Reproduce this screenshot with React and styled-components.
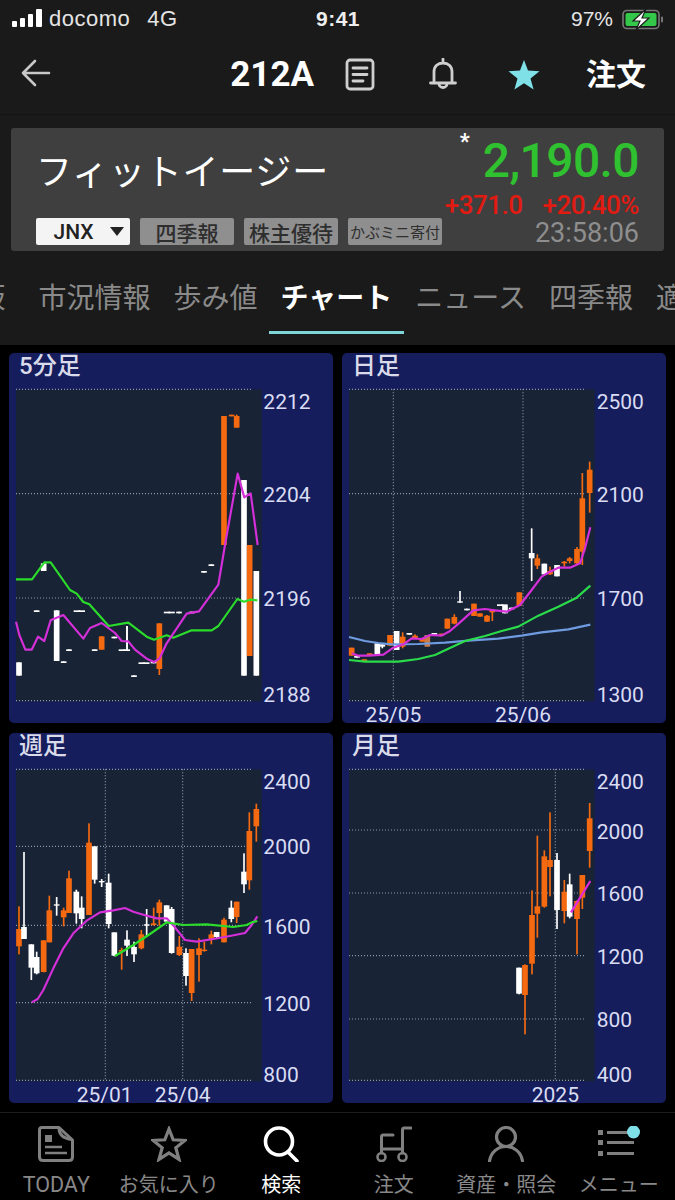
import React from 'react'
import styled, { createGlobalStyle } from 'styled-components'

const O = '#f56a10'
const W = '#ffffff'

// chart numbers are in 3x pixels of the panel, [x, wickTop, wickBottom, bodyTop, bodyBottom, colour, bodyWidth]
const dash = (x, y, w = 17, c = W) => [x, y, y + 5, y, y + 5, c, w]

const charts = [
    {
        title: '5分足',
        originX: 27,
        plotX: 48,
        gridY: [133, 446, 759, 1067],
        gridX: [],
        yLabels: [['2212', 193], ['2204', 471], ['2196', 784], ['2188', 1070]],
        xLabels: [],
        labelX: 790,
        candles: [
            [57, 952, 992, 952, 992, W],
            [131, 655, 678, 655, 678, W],
            dash(110, 796),
            [170, 796, 948, 796, 948, W],
            dash(191, 949),
            dash(207, 913),
            dash(238, 796, 34),
            dash(284, 913),
            [305, 874, 914, 874, 914, O],
            dash(343, 875),
            [381, 843, 916, 843, 916, W, 5],
            dash(373, 913, 34),
            dash(402, 991),
            dash(432, 952, 33),
            dash(461, 950, 18),
            [478, 835, 990, 835, 972, O],
            dash(508, 800, 33),
            dash(537, 800),
            dash(575, 800),
            dash(612, 678),
            dash(634, 658),
            [672, 213, 600, 213, 600, O],
            dash(695, 209, 17, O),
            [710, 209, 248, 213, 248, O],
            [732, 405, 992, 405, 992, W],
            [749, 600, 933, 600, 933, O],
            [769, 678, 992, 678, 992, W],
        ],
        lines: [
            ['#2bdc2b', '48,703 96,703 133,652 152,652 210,735 230,746 250,771 268,778 326,843 385,833 440,875 462,884 500,871 520,878 575,856 635,856 655,843 712,762 732,770 750,764 772,766'],
            ['#d42fd8', '48,830 58,870 76,914 95,914 114,875 133,888 152,826 190,810 250,881 270,849 305,834 345,864 365,888 385,889 405,914 440,941 462,951 478,941 500,895 560,806 597,799 655,719 675,600 713,386 733,457 752,445 773,600'],
        ],
    },
    {
        title: '日足',
        originX: 21,
        plotX: 42,
        gridY: [133, 446, 759, 1067],
        gridX: [175, 564],
        yLabels: [['2500', 193], ['2100', 471], ['1700', 784], ['1300', 1070]],
        xLabels: [['25/05', 175], ['25/06', 564]],
        labelX: 785,
        candles: [
            [50, 908, 932, 908, 932, O],
            dash(66, 933),
            dash(88, 943, 17, O),
            dash(104, 925, 17, O),
            [127, 895, 927, 895, 927, W],
            [142, 898, 910, 898, 905, W],
            [165, 870, 902, 870, 902, O],
            [185, 858, 915, 858, 915, W],
            [203, 862, 910, 875, 905, O],
            dash(223, 864),
            [240, 868, 880, 872, 880, O],
            [262, 880, 890, 880, 890, O],
            [277, 870, 905, 870, 905, '#c97a45'],
            dash(298, 864),
            dash(320, 866, 17, O),
            [337, 821, 851, 821, 851, O],
            [358, 808, 838, 816, 836, O],
            [375, 738, 773, 769, 773, W],
            dash(396, 791),
            [417, 776, 813, 776, 813, O],
            [435, 805, 815, 805, 815, O],
            [456, 810, 830, 812, 830, O],
            [472, 795, 828, 795, 802, O],
            dash(502, 778, 32),
            [510, 780, 805, 782, 805, W],
            dash(530, 788),
            [553, 742, 782, 742, 782, O],
            [590, 550, 708, 624, 640, W],
            [607, 628, 672, 640, 662, O],
            [628, 656, 688, 656, 688, W],
            [645, 665, 690, 678, 688, O],
            [666, 660, 694, 660, 694, W],
            [688, 648, 665, 650, 655, O],
            [704, 636, 655, 640, 648, O],
            [726, 606, 658, 612, 655, O],
            [742, 384, 660, 460, 620, O],
            [764, 350, 503, 374, 444, O],
        ],
        lines: [
            ['#6f9be0', '42,876 90,888 130,894 170,898 250,897 330,893 400,887 490,881 560,872 620,862 700,853 766,839'],
            ['#2bdc4a', '42,945 90,950 190,950 250,942 300,930 340,911 390,888 450,873 500,858 550,845 610,812 670,785 725,758 766,722'],
            ['#d42fd8', '50,925 70,932 100,932 145,929 175,908 205,898 230,880 260,882 285,870 320,872 345,858 375,832 415,796 450,792 480,796 515,800 555,780 590,735 620,695 645,680 670,668 705,668 735,655 750,610 766,547'],
        ],
    },
    {
        title: '週足',
        originX: 27,
        plotX: 48,
        gridY: [133, 364, 601, 833, 1066],
        gridX: [316, 548],
        yLabels: [['2400', 193], ['2000', 388], ['1600', 628], ['1200', 858], ['800', 1070]],
        xLabels: [['25/01', 314], ['25/04', 548]],
        labelX: 790,
        candles: [
            [57, 544, 688, 612, 664, O],
            [72, 381, 642, 606, 642, W],
            [94, 658, 765, 658, 728, W],
            [110, 680, 748, 696, 745, W],
            [131, 646, 742, 646, 741, O],
            [148, 512, 652, 556, 652, O],
            [170, 516, 572, 538, 542, W],
            [191, 548, 604, 556, 577, O],
            [207, 437, 564, 460, 564, O],
            [229, 494, 596, 500, 565, W],
            [245, 514, 610, 548, 582, W],
            [267, 295, 570, 353, 570, O],
            [284, 364, 476, 364, 464, W],
            [305, 462, 486, 468, 472, W],
            [326, 446, 610, 473, 597, W],
            [343, 622, 694, 622, 692, W],
            [365, 668, 734, 675, 680, O],
            [381, 616, 693, 644, 662, W],
            [402, 650, 711, 666, 688, W],
            [424, 615, 673, 628, 670, O],
            [440, 552, 636, 598, 602, W],
            [461, 548, 602, 595, 600, O],
            [478, 524, 602, 532, 564, O],
            [500, 541, 590, 541, 590, W],
            [515, 546, 686, 552, 684, W],
            [538, 633, 693, 665, 690, O],
            [558, 670, 782, 684, 753, W],
            [575, 672, 828, 672, 804, O],
            [597, 640, 770, 670, 690, O],
            [613, 650, 680, 674, 678, O],
            [634, 617, 658, 628, 644, O],
            [650, 621, 640, 621, 636, W],
            [672, 578, 652, 584, 652, O],
            [694, 527, 592, 548, 582, W],
            [710, 530, 594, 530, 576, O],
            [732, 385, 504, 440, 478, W],
            [748, 262, 494, 318, 466, O],
            [769, 236, 350, 252, 304, O],
        ],
        lines: [
            ['#d42fd8', '95,832 113,822 130,795 160,730 190,670 220,625 260,587 300,562 340,556 375,549 400,560 440,572 470,580 500,580 525,607 555,645 590,650 640,642 690,633 735,624 755,600 772,574'],
            ['#2bdc2b', '345,693 400,660 450,627 500,592 550,600 620,598 700,606 740,600 755,592 772,588'],
        ],
    },
    {
        title: '月足',
        originX: 21,
        plotX: 42,
        gridY: [133, 315, 504, 692, 882, 1066],
        gridX: [661],
        yLabels: [['2400', 193], ['2000', 341], ['1600', 529], ['1200', 717], ['800', 907], ['400', 1070]],
        xLabels: [['2025', 661]],
        labelX: 785,
        candles: [
            [552, 728, 808, 728, 806, W],
            [570, 718, 928, 720, 810, O],
            [591, 496, 748, 570, 716, O],
            [607, 332, 638, 544, 566, O],
            [628, 376, 548, 394, 545, O],
            [645, 262, 514, 405, 426, O],
            [666, 384, 612, 405, 555, W],
            [688, 465, 595, 500, 558, O],
            [704, 446, 580, 478, 575, W],
            [726, 526, 688, 528, 582, O],
            [742, 450, 552, 450, 518, O],
            [764, 234, 428, 280, 378, O],
        ],
        lines: [['#e02ae0', '708,562 766,468']],
    },
]

const tabs = [
    { label: '板', after: 10 },
    { label: '市況情報' },
    { label: '歩み値' },
    { label: 'チャート', active: true },
    { label: 'ニュース' },
    { label: '四季報' },
    { label: '適時開示' },
]

const App = () => {
    return (
        <Screen>
            <GlobalStyle />
            <StatusBar>
                <StatusLeft>
                    <svg width="30" height="18" viewBox="0 0 30 18" fill="#fff">
                        <rect x="0" y="12" width="5" height="6" rx="1" />
                        <rect x="8" y="9" width="5" height="9" rx="1" />
                        <rect x="16" y="5" width="5" height="13" rx="1" />
                        <rect x="24" y="0" width="6" height="18" rx="1" />
                    </svg>
                    <Carrier>docomo</Carrier>
                    <Carrier>4G</Carrier>
                </StatusLeft>
                <Clock>9:41</Clock>
                <StatusRight>
                    97%
                    <svg width="42" height="21" viewBox="0 0 42 21">
                        <rect x="1" y="1.5" width="36" height="18" rx="4" fill="none" stroke="#777" strokeWidth="1.6" />
                        <rect x="3.5" y="4" width="31" height="13" rx="2" fill="#34c84a" />
                        <rect x="39" y="7.5" width="2" height="6" rx="1" fill="#777" />
                        <path d="M24 0 L11 12 H18 L14 21 L27 9 H20 Z" fill="#fff" stroke="#1a1a1a" strokeWidth="1.2" />
                    </svg>
                </StatusRight>
            </StatusBar>

            <NavBar>
                <BackIcon width="30" height="28" viewBox="0 0 30 28" fill="none" stroke="#c8c8c8" strokeWidth="2.6" strokeLinecap="round" strokeLinejoin="round">
                    <path d="M14 2 L2 14 L14 26 M2 14 H28" />
                </BackIcon>
                <NavActions>
                    <Ticker>212A</Ticker>
                    <NavIcon $left={31}>
                        <svg width="30" height="33" viewBox="0 0 30 33" fill="none" stroke="#cfcfcf" strokeWidth="2.8" strokeLinecap="round">
                            <rect x="2" y="2" width="26" height="29" rx="3" />
                            <path d="M8 10 H22 M8 16.5 H22 M8 23 H18" />
                        </svg>
                    </NavIcon>
                    <NavIcon $left={54}>
                        <svg width="28" height="33" viewBox="0 0 28 33" fill="none" stroke="#cfcfcf" strokeWidth="2.8" strokeLinejoin="round">
                            <path d="M14 1 V5 M5 24 V14 C5 8 9 5 14 5 S23 8 23 14 V24 M1.5 25 H26.5" strokeLinecap="round" />
                            <path d="M10 25.5 A4 4 0 0 0 18 25.5" />
                        </svg>
                    </NavIcon>
                    <NavIcon $left={51}>
                        <svg width="32" height="30" viewBox="0 0 32 30" fill="#7fe0e8">
                            <path d="M16 0 L20 10.6 L31.5 11.2 L22.5 18.4 L25.6 29.6 L16 23.3 L6.4 29.6 L9.5 18.4 L0.5 11.2 L12 10.6 Z" />
                        </svg>
                    </NavIcon>
                    <OrderLink>注文</OrderLink>
                </NavActions>
            </NavBar>

            <StockPanel>
                <StockLeft>
                    <StockName>フィットイージー</StockName>
                    <BadgeRow>
                        <MarketSelect>
                            JNX
                            <Caret />
                        </MarketSelect>
                        <Badge>四季報</Badge>
                        <Badge>株主優待</Badge>
                        <Badge $small>かぶミニ寄付</Badge>
                    </BadgeRow>
                </StockLeft>
                <StockRight>
                    <PriceRow>
                        <Mark>*</Mark>
                        <Price>2,190.0</Price>
                    </PriceRow>
                    <ChangeRow>
                        <span>+371.0</span>
                        <span>+20.40%</span>
                    </ChangeRow>
                    <QuoteTime>23:58:06</QuoteTime>
                </StockRight>
            </StockPanel>

            <TabBar>
                {tabs.map((tab) => (
                    <Tab key={tab.label} $active={tab.active} $after={tab.after}>{tab.label}</Tab>
                ))}
            </TabBar>

            <ChartGrid>
                {charts.map((chart) => (
                    <Chart key={chart.title} {...chart} />
                ))}
            </ChartGrid>

            <BottomNav>
                <NavItem $size={21.5}>
                    <IconSlot>
                        <svg width="36" height="36" viewBox="0 0 36 36" fill="none" stroke="#808080" strokeWidth="3" strokeLinejoin="round">
                            <path d="M4 1.5 H21 L34.5 14 V31 Q34.5 34.5 31 34.5 H5 Q1.5 34.5 1.5 31 V4 Q1.5 1.5 4 1.5 Z" />
                            <path d="M21 2 Q21 12 34 13.5" />
                            <rect x="7" y="9" width="7" height="7" fill="#808080" stroke="none" />
                            <path d="M7 21 H24 M7 27 H29" strokeWidth="2.6" />
                        </svg>
                    </IconSlot>
                    TODAY
                </NavItem>
                <NavItem>
                    <IconSlot>
                        <svg width="36" height="36" viewBox="0 0 36 36" fill="none" stroke="#808080" strokeWidth="3.2" strokeLinejoin="miter">
                            <path d="M18 3 L22.2 13.8 L34 14.4 L24.8 21.8 L28 33.4 L18 26.8 L8 33.4 L11.2 21.8 L2 14.4 L13.8 13.8 Z" />
                        </svg>
                    </IconSlot>
                    お気に入り
                </NavItem>
                <NavItem $active>
                    <IconSlot>
                        <svg width="38" height="36" viewBox="0 0 38 36" fill="none" stroke="#fff" strokeWidth="3.6">
                            <circle cx="17" cy="15.5" r="13.5" />
                            <path d="M26 26 L35 35" strokeLinecap="round" />
                        </svg>
                    </IconSlot>
                    検索
                </NavItem>
                <NavItem>
                    <IconSlot>
                        <svg width="36" height="36" viewBox="0 0 36 36" fill="none" stroke="#808080" strokeWidth="3" strokeLinecap="round">
                            <path d="M35 2 H28 Q26.5 2 26.5 4 V27" />
                            <path d="M17 9 H7 Q5.5 9 5.5 11 V27" />
                            <path d="M5.5 23 H26.5" />
                            <circle cx="5.5" cy="31" r="4" strokeWidth="2.6" />
                            <circle cx="26.5" cy="31" r="4" strokeWidth="2.6" />
                        </svg>
                    </IconSlot>
                    注文
                </NavItem>
                <NavItem>
                    <IconSlot>
                        <svg width="36" height="36" viewBox="0 0 36 36" fill="none" stroke="#808080" strokeWidth="3.2" strokeLinecap="round">
                            <circle cx="18" cy="11" r="9.5" />
                            <path d="M1.5 35 C3 26 10 20.5 18 20.5 S33 26 34.5 35" />
                        </svg>
                    </IconSlot>
                    資産・照会
                </NavItem>
                <NavItem>
                    <IconSlot>
                        <svg width="44" height="36" viewBox="0 0 44 36" fill="#808080">
                            <rect x="1" y="4" width="5" height="5" />
                            <rect x="1" y="14" width="5" height="5" />
                            <rect x="1" y="25" width="5" height="5" />
                            <rect x="10" y="5" width="27" height="3" />
                            <rect x="10" y="15" width="27" height="3" />
                            <rect x="10" y="26" width="27" height="3" />
                            <circle cx="36.5" cy="6" r="6.5" fill="#7fe0e8" />
                        </svg>
                    </IconSlot>
                    メニュー
                </NavItem>
            </BottomNav>
        </Screen>
    )
}

const Chart = ({ title, originX, plotX, gridY, gridX, yLabels, xLabels, labelX, candles, lines }) => {
    return (
        <ChartCard>
            <ChartTitle>{title}</ChartTitle>
            <ChartSvg viewBox={`${originX} 129 972 1005`}>
                <rect x={plotX} y="133" width="737" height="936" fill="#182336" />
                {gridY.map((y) => (
                    <GridLine key={y} x1={plotX} x2={plotX + 708} y1={y} y2={y} />
                ))}
                {gridX.map((x) => (
                    <GridLine key={x} x1={x} x2={x} y1="133" y2="1067" />
                ))}
                {candles.map(([x, wickTop, wickBottom, top, bottom, colour, width = 17], i) => (
                    <g key={i} fill={colour}>
                        <rect x={x - 2.5} y={wickTop} width="5" height={wickBottom - wickTop} />
                        <rect x={x - width / 2} y={top} width={width} height={bottom - top} />
                    </g>
                ))}
                {lines.map(([colour, points]) => (
                    <polyline key={colour} points={points} fill="none" stroke={colour} strokeWidth="6.5" strokeLinejoin="round" />
                ))}
                {yLabels.map(([text, y]) => (
                    <AxisLabel key={text} x={labelX} y={y}>{text}</AxisLabel>
                ))}
                {xLabels.map(([text, x]) => (
                    <AxisLabel key={text} x={x} y="1130" textAnchor="middle">{text}</AxisLabel>
                ))}
            </ChartSvg>
        </ChartCard>
    )
}

export default App

const GlobalStyle = createGlobalStyle`
    html, body {
        margin: 0;
        padding: 0;
        background: #000;
        overflow: hidden;
    }
`

const Screen = styled.div`
    width: 675px;
    height: 1200px;
    display: flex;
    flex-direction: column;
    background: #1a1a1a;
    color: #fff;
    font-family: Roboto, "Noto Sans CJK JP", sans-serif;
    overflow: hidden;
`

const StatusBar = styled.div`
    height: 38px;
    padding: 0 11px 0 12px;
    display: grid;
    grid-template-columns: 1fr auto 1fr;
    align-items: center;
    font-family: "Liberation Sans", sans-serif;
    font-size: 21px;
`

const StatusLeft = styled.div`
    display: flex;
    align-items: center;
    gap: 7px;

    svg {
        margin-top: -2px;
    }
`

const Carrier = styled.span`
    color: #e4e4e4;
    font-size: 22px;
    letter-spacing: 0.5px;

    & + & {
        margin-left: 10px;
    }
`

const Clock = styled.span`
    font-weight: 700;
    letter-spacing: 0.5px;
    color: #eee;
`

const StatusRight = styled.div`
    display: flex;
    justify-content: flex-end;
    align-items: center;
    gap: 9px;
    color: #e4e4e4;
`

const NavBar = styled.div`
    height: 77px;
    padding: 0 29px 3px 21px;
    box-sizing: border-box;
    display: flex;
    align-items: center;
    justify-content: space-between;
    border-bottom: 1px solid #141414;
`

const BackIcon = styled.svg`
    margin-top: -3px;
`

const NavActions = styled.div`
    display: flex;
    align-items: center;
`

const Ticker = styled.span`
    font-size: 35px;
    font-weight: 700;
    color: #fff;
`

const NavIcon = styled.span`
    display: flex;
    margin-left: ${(props) => props.$left}px;
`

const OrderLink = styled.span`
    margin-left: 46px;
    font-size: 30px;
    font-weight: 700;
    line-height: 36px;
`

const StockPanel = styled.div`
    height: 123px;
    margin: 13px 11px 0;
    padding: 0 25px 6px;
    box-sizing: border-box;
    display: flex;
    justify-content: space-between;
    background: #3f3f3f;
    border-radius: 3px;
`

const StockLeft = styled.div`
    display: flex;
    flex-direction: column;
    justify-content: space-between;
`

const StockName = styled.div`
    margin: 22px 0 0 0;
    font-size: 36px;
    line-height: 46px;
    color: #fff;
    letter-spacing: 0.8px;
    white-space: nowrap;
`

const BadgeRow = styled.div`
    display: flex;
    gap: 10px;
`

const Badge = styled.span`
    width: 94px;
    height: 27px;
    box-sizing: border-box;
    display: flex;
    align-items: center;
    justify-content: center;
    background: #8f8f8f;
    border-radius: 2px;
    color: #2e2e2e;
    font-size: ${(props) => (props.$small ? '15px' : '21px')};
    font-weight: ${(props) => (props.$small ? 400 : 500)};
    white-space: nowrap;
`

const MarketSelect = styled(Badge)`
    padding-left: 11px;
    background: #f4f4f4;
    color: #222;
    font-weight: 500;
    gap: 16px;
`

const Caret = styled.i`
    width: 0;
    height: 0;
    border-left: 7px solid transparent;
    border-right: 7px solid transparent;
    border-top: 9px solid #222;
`

const StockRight = styled.div`
    display: flex;
    flex-direction: column;
    align-items: flex-end;
    margin-left: -30px;
`

const PriceRow = styled.div`
    height: 64px;
    display: flex;
    align-items: flex-start;
`

const Mark = styled.span`
    margin: 2px 13px 0 0;
    font-size: 22px;
    font-weight: 700;
    line-height: 24px;
`

const Price = styled.span`
    margin-top: 2px;
    font-size: 48px;
    line-height: 62px;
    font-weight: 500;
    color: #2fc12f;
    letter-spacing: -0.6px;
`

const ChangeRow = styled.div`
    display: flex;
    gap: 20px;
    height: 27px;
    line-height: 27px;
    font-size: 26px;
    font-weight: 500;
    color: #e11a12;
    letter-spacing: -0.5px;
`

const QuoteTime = styled.div`
    font-size: 27px;
    line-height: 28px;
    color: #8e8e8e;
`

const TabBar = styled.div`
    height: 80px;
    margin: 14px 0 0 -34px;
    display: flex;
    align-items: flex-start;
    white-space: nowrap;
`

const Tab = styled.div`
    height: 69px;
    box-sizing: border-box;
    padding: 0 11.5px 4px;
    margin-right: ${(props) => props.$after || 0}px;
    display: flex;
    align-items: center;
    font-size: 28px;
    font-weight: ${(props) => (props.$active ? 700 : 400)};
    color: ${(props) => (props.$active ? '#fff' : '#8a8a8a')};
    border-bottom: 3px solid ${(props) => (props.$active ? '#7fd4d8' : 'transparent')};
`

const ChartGrid = styled.div`
    flex: 1;
    padding: 8px 9px 9px;
    display: grid;
    grid-template-columns: 324px 324px;
    grid-template-rows: 370px 370px;
    column-gap: 9px;
    row-gap: 10px;
    background: #000;
`

const ChartCard = styled.div`
    background: #151d5c;
    border-radius: 5px;
    overflow: hidden;
`

const ChartTitle = styled.div`
    height: 35px;
    padding-left: 10px;
    font-size: 24px;
    line-height: 27px;
    font-weight: 500;
    color: #dadbea;
`

const ChartSvg = styled.svg`
    display: block;
    width: 324px;
    height: 335px;
`

const GridLine = styled.line`
    stroke: #8e99ad;
    stroke-width: 3.5;
    stroke-dasharray: 3 6;
`

const AxisLabel = styled.text`
    fill: #d9dcf2;
    font-family: Roboto, sans-serif;
    font-size: 63px;
`

const BottomNav = styled.div`
    height: 88px;
    display: grid;
    grid-template-columns: repeat(6, 1fr);
    background: #000;
    border-top: 1px solid #1c1c1c;
    box-sizing: border-box;
`

const NavItem = styled.div`
    padding-top: 13px;
    display: flex;
    flex-direction: column;
    align-items: center;
    font-size: ${(props) => props.$size || 20}px;
    line-height: 26px;
    color: ${(props) => (props.$active ? '#fff' : '#888')};
    white-space: nowrap;
`

const IconSlot = styled.span`
    height: 36px;
    margin-bottom: 10px;
    display: flex;
    justify-content: center;
`
